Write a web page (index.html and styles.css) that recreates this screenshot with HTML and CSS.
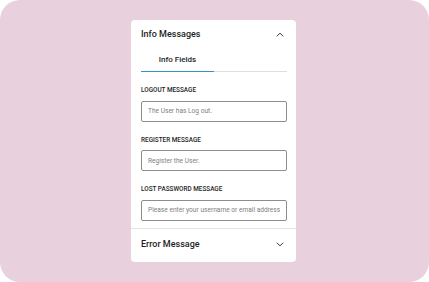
FILE: index.html
```html
<!DOCTYPE html>
<html lang="en">
<head>
    <meta charset="UTF-8">
    <meta name="viewport" content="width=device-width, initial-scale=1.0">
    <title>Info Messages</title>
    <link rel="stylesheet" href="styles.css">
</head>
<body>

    <div class="canvas">
        <div class="panel">
            <!-- Open section -->
            <div class="section-head">
                <span>Info Messages</span>
                <svg class="chevron" width="8" height="5" viewBox="0 0 8 5"><path d="M0.8 4.3 L4 1.1 L7.2 4.3" fill="none" stroke="#1e1e1e" stroke-width="0.9"/></svg>
            </div>

            <div class="section-body">
                <div class="tabs">
                    <div class="tab active">Info Fields</div>
                    <div class="tab"></div>
                </div>

                <div class="field">
                    <label class="field-label">Logout Message</label>
                    <input class="field-input" type="text" placeholder="The User has Log out.">
                </div>
                <div class="field">
                    <label class="field-label">Register Message</label>
                    <input class="field-input" type="text" placeholder="Register the User.">
                </div>
                <div class="field">
                    <label class="field-label">Lost Password Message</label>
                    <input class="field-input" type="text" placeholder="Please enter your username or email address.">
                </div>
            </div>

            <!-- Closed section -->
            <div class="section-head closed">
                <span>Error Message</span>
                <svg class="chevron" width="8" height="5" viewBox="0 0 8 5"><path d="M0.8 0.7 L4 3.9 L7.2 0.7" fill="none" stroke="#1e1e1e" stroke-width="0.9"/></svg>
            </div>
        </div>
    </div>

</body>
</html>
```

FILE: styles.css
```css
html, body {
    margin: 0;
    padding: 0;
    background-color: #fff;
}
body {
    font-family: Roboto, "Noto Sans", Arial, sans-serif;
    color: #1e1e1e;
}
.canvas {
    width: 429px;
    height: 282px;
    background-color: #e8d0dc;
    border-radius: 20px;
    display: flex;
    align-items: center;
    justify-content: center;
}
.panel {
    width: 165px;
    height: 242px;
    margin-right: 2px;
    background-color: #fff;
    border-radius: 4px;
    box-sizing: border-box;
}
.section-head {
    height: 28px;
    display: flex;
    align-items: center;
    justify-content: space-between;
    padding: 0 12px 0 10px;
    font-size: 9px;
    font-weight: 500;
}
.section-head.closed {
    height: 31px;
    border-top: 1px solid #e4e4e4;
}
.section-body {
    padding: 0 9px 7px 10px;
}
/* Tabs */
.tabs {
    display: flex;
    border-bottom: 1px solid #dedede;
}
.tab {
    flex: 1;
    height: 23px;
    line-height: 23px;
    text-align: center;
    font-size: 8px;
    font-weight: 500;
    margin-bottom: -1px;
}
.tab.active {
    border-bottom: 1.5px solid #3b8fc1;
}
/* Fields */
.field {
    margin-top: 13px;
}
.field-label {
    display: block;
    height: 10px;
    line-height: 10px;
    font-size: 6.4px;
    font-weight: 500;
    text-transform: uppercase;
    margin-bottom: 5.5px;
}
.field-input {
    display: block;
    width: 100%;
    height: 21px;
    box-sizing: border-box;
    border: 1px solid #8d8d8d;
    border-radius: 2px;
    padding: 0 6px;
    font-family: Roboto, "Noto Sans", Arial, sans-serif;
    font-size: 6.6px;
    color: #1e1e1e;
    outline: none;
}
.field-input::placeholder {
    color: #808080;
}
```
